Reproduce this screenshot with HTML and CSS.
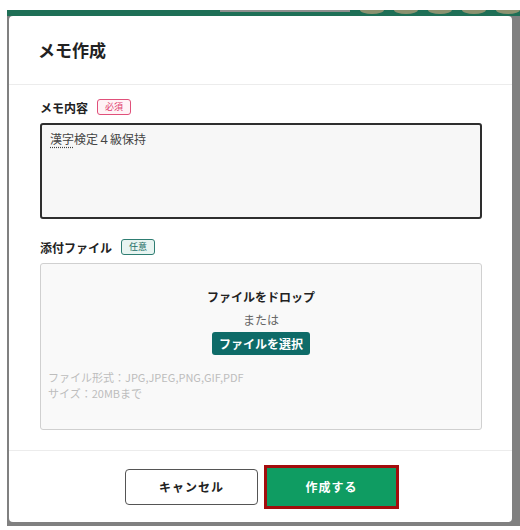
FILE: index.html
```html
<!DOCTYPE html>
<html lang="ja">
<head>
<meta charset="utf-8">
<title>メモ作成</title>
<link rel="stylesheet" href="styles.css">
</head>
<body>
<div class="screen">
  <div class="backdrop">
    <div class="topbar">
      <span class="bar-gray"></span>
      <span class="dot"></span>
      <span class="dot"></span>
      <span class="dot"></span>
      <span class="dot"></span>
      <span class="dot"></span>
    </div>
    <div class="modal">
      <div class="modal-header">
        <h1 class="modal-title">メモ作成</h1>
      </div>
      <div class="modal-body">
        <div class="field-label">
          <span class="label-text">メモ内容</span>
          <span class="badge badge-required">必須</span>
        </div>
        <div class="memo-input"><span class="spell">漢字</span>検定４級保持</div>

        <div class="field-label field-label-second">
          <span class="label-text">添付ファイル</span>
          <span class="badge badge-optional">任意</span>
        </div>
        <div class="dropzone">
          <div class="drop-center">
            <div class="drop-title">ファイルをドロップ</div>
            <div class="drop-or">または</div>
            <button class="select-btn" type="button">ファイルを選択</button>
          </div>
          <div class="drop-info">
            <div>ファイル形式：JPG,JPEG,PNG,GIF,PDF</div>
            <div>サイズ：20MBまで</div>
          </div>
        </div>
      </div>
      <div class="modal-footer">
        <button class="btn btn-cancel" type="button">キャンセル</button>
        <button class="btn btn-create" type="button">作成する</button>
      </div>
    </div>
  </div>
</div>
</body>
</html>
```
FILE: styles.css
```css
* { box-sizing: border-box; }

html, body {
  margin: 0;
  padding: 0;
  background: #ffffff;
  font-family: "Noto Sans CJK JP", "Noto Sans", sans-serif;
}

.screen {
  width: 520px;
  height: 530px;
  padding: 10px 0 4px 7px;
  overflow: hidden;
}

.backdrop {
  height: 516px;
  background: #808080;
  display: flex;
  flex-direction: column;
}

.topbar {
  height: 6px;
  flex: none;
  background: #1e6f56;
  display: flex;
  align-items: flex-start;
}

.bar-gray {
  width: 130px;
  height: 2px;
  margin-left: 213px;
  background: #8f8f8f;
}

.dot {
  width: 24px;
  height: 4px;
  margin-left: 10px;
  border-radius: 0 0 50% 50% / 0 0 100% 100%;
  background: #8c9270;
}

.dot:first-of-type { margin-left: 18px; }

.modal {
  margin-left: 2px;
  width: 503px;
  height: 506px;
  background: #ffffff;
  border-radius: 4px;
  display: flex;
  flex-direction: column;
}

.modal-header {
  height: 69px;
  flex: none;
  padding-left: 29px;
  display: flex;
  align-items: center;
  border-bottom: 1px solid #ececec;
}

.modal-title {
  margin: 0;
  font-size: 17px;
  font-weight: 700;
  color: #222;
  padding-bottom: 1px;
}

.modal-body {
  flex: none;
  padding: 14px 30px 20px 31px;
  border-bottom: 1px solid #ececec;
}

.field-label {
  display: flex;
  align-items: center;
  gap: 9px;
  height: 16px;
}

.field-label-second { margin-top: 20px; }

.label-text {
  font-size: 12px;
  font-weight: 700;
  color: #222;
}

.badge {
  height: 16px;
  padding: 0 7px;
  border: 1px solid;
  border-radius: 3px;
  font-size: 9px;
  line-height: 14px;
}

.badge-required {
  color: #e0406e;
  border-color: #e0507a;
  background: #fff3f6;
}

.badge-optional {
  color: #1f6f66;
  border-color: #2e7d72;
  background: #e8f4f1;
}

.memo-input {
  margin-top: 8px;
  height: 96px;
  border: 2px solid #2e2e2e;
  border-radius: 3px;
  background: #f7f7f7;
  padding: 6px 8px;
  font-size: 12px;
  line-height: 16px;
  color: #444;
}

.spell {
  text-decoration: underline dotted #444;
  text-underline-offset: 3px;
}

.dropzone {
  margin-top: 8px;
  height: 167px;
  border: 1px solid #d0d0d0;
  border-radius: 3px;
  background: #f9f9f9;
  padding: 24px 7px 0;
}

.drop-center {
  display: flex;
  flex-direction: column;
  align-items: center;
}

.drop-title {
  font-size: 12px;
  font-weight: 700;
  line-height: 18px;
  color: #222;
}

.drop-or {
  margin-top: 5px;
  font-size: 12px;
  line-height: 18px;
  color: #666;
}

.select-btn {
  margin-top: 3px;
  height: 23px;
  padding: 0 7px;
  border: none;
  border-radius: 3px;
  background: #0e6b68;
  color: #fff;
  font-family: inherit;
  font-size: 12px;
  font-weight: 700;
  letter-spacing: 0;
}

.drop-info {
  margin-top: 14px;
  font-size: 11px;
  line-height: 16px;
  color: #bdbdbd;
}

.modal-footer {
  flex: 1;
  display: flex;
  align-items: center;
  justify-content: center;
  gap: 9px;
}

.btn {
  font-family: inherit;
  font-size: 12px;
  font-weight: 700;
  letter-spacing: 1px;
  border-radius: 4px;
}

.btn-cancel {
  width: 133px;
  height: 36px;
  border: 1px solid #555;
  background: #fff;
  color: #222;
}

.btn-create {
  width: 129px;
  height: 38px;
  border: none;
  border-radius: 0;
  background: #0f9c62;
  color: #fff;
  outline: 3px solid #a30d0d;
}
```
